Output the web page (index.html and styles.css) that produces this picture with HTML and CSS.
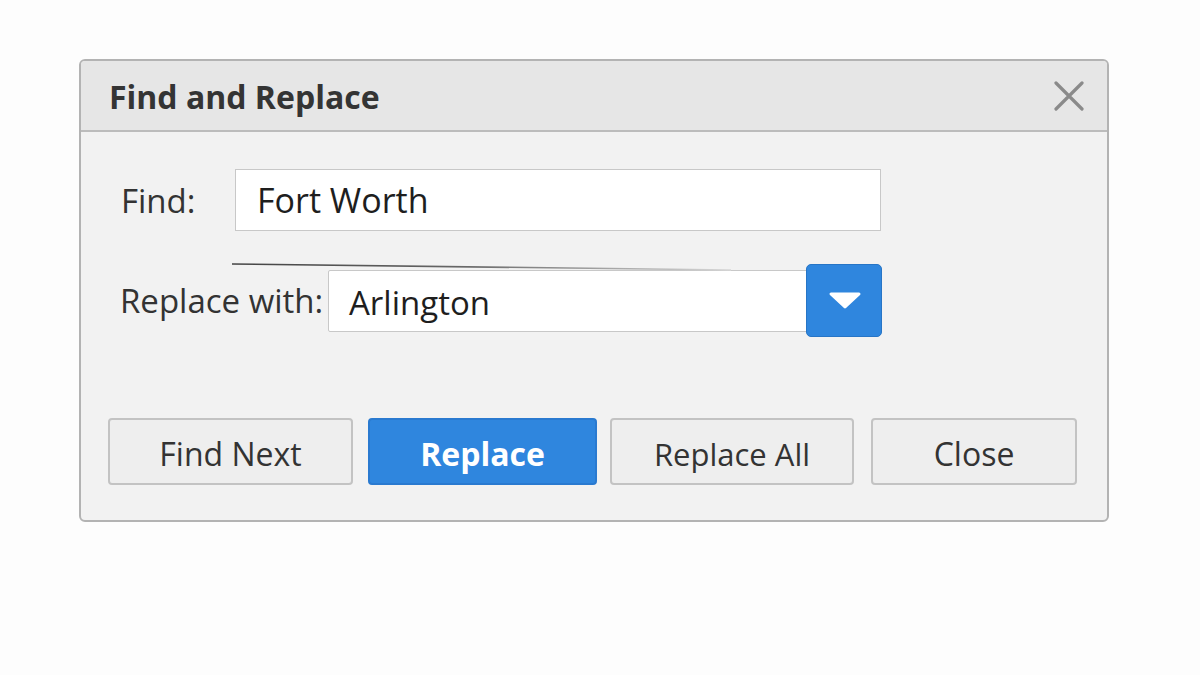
FILE: index.html
```html
<!DOCTYPE html>
<html lang="en">
<head>
<meta charset="utf-8">
<title>Find and Replace</title>
<link rel="stylesheet" href="styles.css">
</head>
<body>
<div class="dialog">
  <div class="titlebar">
    <span class="title">Find and Replace</span>
    <svg class="close-x" width="30" height="30" viewBox="0 0 30 30" aria-label="Close">
      <path d="M2 2 L28 28 M28 2 L2 28" stroke="#8a8a8a" stroke-width="3.2" stroke-linecap="round" fill="none"/>
    </svg>
  </div>
  <div class="body">
    <svg class="stray-line" width="600" height="12" viewBox="0 0 600 12">
      <defs>
        <linearGradient id="lg" x1="0" x2="1" y1="0" y2="0">
          <stop offset="0" stop-color="#444"/>
          <stop offset="0.45" stop-color="#666"/>
          <stop offset="1" stop-color="#d8d8d8"/>
        </linearGradient>
      </defs>
      <path d="M1 2 Q 200 4.5 500 8" stroke="url(#lg)" stroke-width="1.6" fill="none"/>
    </svg>
    <div class="row row-find">
      <label class="label label-find">Find:</label>
      <div class="input input-find">Fort Worth</div>
    </div>
    <div class="row row-replace">
      <label class="label label-replace">Replace with:</label>
      <div class="input input-replace">Arlington</div>
      <div class="dropdown">
        <svg width="34" height="20" viewBox="0 0 34 20">
          <polygon points="3,3 31,3 17,16" fill="#fff" stroke="#fff" stroke-width="3" stroke-linejoin="round"/>
        </svg>
      </div>
    </div>
    <div class="buttons">
      <div class="btn btn-findnext">Find Next</div>
      <div class="btn btn-primary btn-replace">Replace</div>
      <div class="btn btn-replaceall">Replace All</div>
      <div class="btn btn-close">Close</div>
    </div>
  </div>
</div>
</body>
</html>
```

FILE: styles.css
```css
html, body {
  margin: 0;
  padding: 0;
}
body {
  background: #fdfdfd;
  width: 1200px;
  height: 675px;
  overflow: hidden;
  font-family: "Open Sans", "Noto Sans", "DejaVu Sans", sans-serif;
  color: #2e2e2e;
}
.dialog {
  box-sizing: border-box;
  margin: 59px 0 0 79px;
  width: 1030px;
  height: 463px;
  border: 2px solid #b3b3b3;
  border-radius: 6px;
  background: #f2f2f2;
  overflow: hidden;
  display: flex;
  flex-direction: column;
}
.titlebar {
  box-sizing: border-box;
  height: 71px;
  background: #e6e6e6;
  border-bottom: 2px solid #bcbcbc;
  display: flex;
  align-items: center;
  justify-content: space-between;
  padding: 0 23px 0 28px;
}
.title {
  font-weight: 700;
  font-size: 32px;
  color: #343434;
  margin-top: 2px;
}
.close-x {
  display: block;
  margin-top: 1px;
}
.body {
  position: relative;
  flex: 1;
  padding: 37px 0 0 40px;
}
.stray-line {
  position: absolute;
  left: 150px;
  top: 130px;
}
.row {
  display: flex;
  align-items: center;
}
.row-replace {
  margin-top: 33px;
  height: 73px;
}
.label {
  font-size: 33px;
  color: #333;
}
.label-find {
  width: 114px;
}
.label-replace {
  width: 207px;
  margin-left: -1px;
}
.input {
  box-sizing: border-box;
  background: #fff;
  border: 1px solid #c8c8c8;
  height: 62px;
  display: flex;
  align-items: center;
  color: #1e1e1e;
}
.input-find {
  width: 646px;
  padding-left: 21px;
  font-size: 34px;
}
.input-replace {
  width: 480px;
  padding-left: 20px;
  padding-top: 3px;
  font-size: 33px;
  border-radius: 2px 0 0 2px;
  margin-left: 1px;
}
.dropdown {
  box-sizing: border-box;
  width: 76px;
  height: 73px;
  margin-left: -2px;
  background: #2f86de;
  border: 1px solid #2775c6;
  border-radius: 5px;
  display: flex;
  align-items: center;
  justify-content: center;
  padding-left: 2px;
}
.dropdown svg {
  display: block;
}
.buttons {
  display: flex;
  margin-top: 81px;
  margin-left: -13px;
}
.btn {
  box-sizing: border-box;
  height: 67px;
  padding-top: 4px;
  background: #eeeeee;
  border: 2px solid #c3c3c3;
  border-radius: 4px;
  display: flex;
  align-items: center;
  justify-content: center;
  font-size: 32px;
  color: #333;
}
.btn-findnext { width: 245px; }
.btn-replace { width: 229px; margin-left: 15px; }
.btn-replaceall { width: 244px; margin-left: 13px; font-size: 31px; }
.btn-close { width: 206px; margin-left: 17px; }
.btn-primary {
  background: #2f86de;
  border-color: #2a7ad0;
  color: #fff;
  font-weight: 700;
}
```
